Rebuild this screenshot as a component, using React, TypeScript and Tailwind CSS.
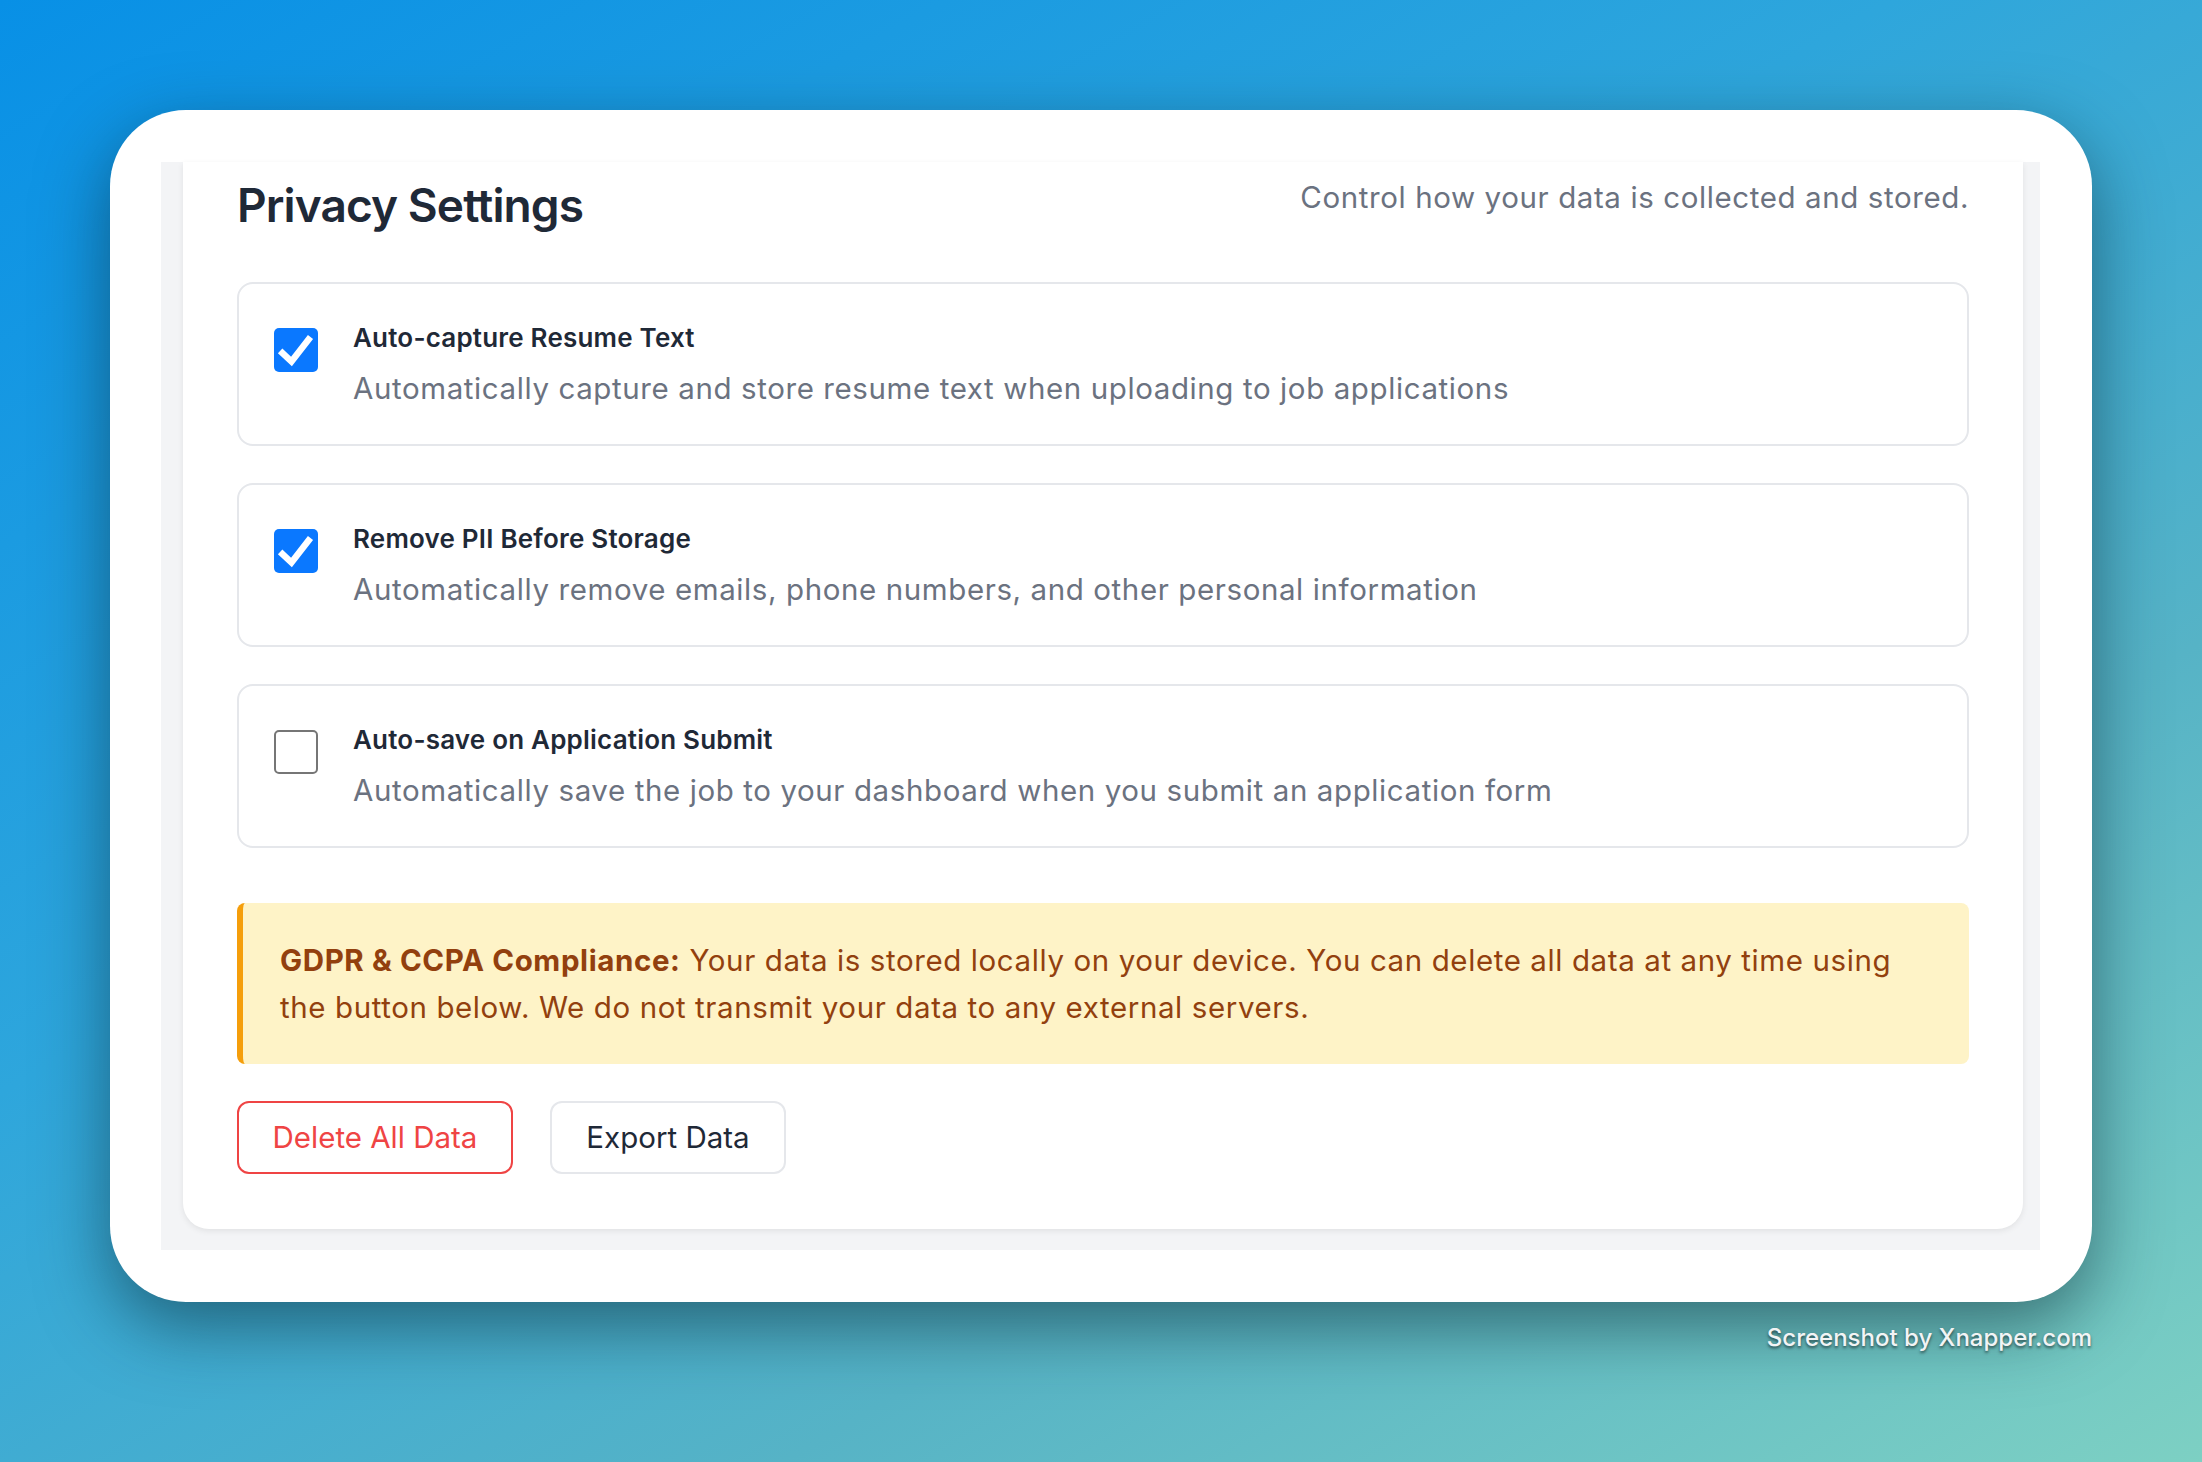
import React, { useState } from "react";

interface SettingProps {
  title: string;
  description: string;
  checked: boolean;
  onToggle: () => void;
}

const CheckBox: React.FC<{ checked: boolean }> = ({ checked }) =>
  checked ? (
    <div className="w-[44px] h-[44px] rounded-[5px] bg-[#0a78ff] flex items-center justify-center shrink-0">
      <svg width="44" height="44" viewBox="0 0 44 44" fill="none">
        <path d="M8.5 25 L17.5 33.5 L34.5 11.5" stroke="white" strokeWidth="6.5" strokeLinecap="square" strokeLinejoin="miter" />
      </svg>
    </div>
  ) : (
    <div className="w-[44px] h-[44px] rounded-[5px] border-[2.5px] border-[#767676] bg-white shrink-0" />
  );

const SettingRow: React.FC<SettingProps> = ({ title, description, checked, onToggle }) => (
  <div
    className="flex items-start gap-[35px] border-2 border-[#e5e7eb] rounded-[16px] pt-[36px] pb-[36px] px-[35px] h-[164px] cursor-pointer"
    onClick={onToggle}
  >
    <div className="mt-[8px]">
      <CheckBox checked={checked} />
    </div>
    <div className="flex flex-col">
      <span className="text-[26px] leading-[36px] font-semibold text-[#1f2937] tracking-[0.2px]">{title}</span>
      <span className="text-[29.5px] leading-[40px] mt-[12px] text-[#6b7280] tracking-[0.6px]">{description}</span>
    </div>
  </div>
);

const App: React.FC = () => {
  const [resume, setResume] = useState(true);
  const [pii, setPii] = useState(true);
  const [autoSave, setAutoSave] = useState(false);

  return (
    <div
      className="w-[2202px] h-[1462px] overflow-hidden bg-[linear-gradient(150deg,#0890e6_0%,#2ea6dc_40%,#56b3c6_70%,#7dd0c3_100%)] pt-[110px] pl-[110px]"
      style={{ fontFamily: "Inter, 'Noto Sans', sans-serif" }}
    >
      {/* window frame */}
      <div className="w-[1982px] h-[1192px] rounded-[76px] bg-white pt-[52px] pb-[52px] pl-[51px] pr-[52px] shadow-[0_24px_70px_rgba(10,40,50,0.55)]">
        <div className="h-full bg-[#f3f4f6] pl-[22px] pr-[17px] pb-[21px]">
          <div className="h-full bg-white rounded-b-[26px] shadow-[0_2px_6px_rgba(0,0,0,0.08)] px-[54px] pt-[15px]">
            {/* Header */}
            <div className="flex items-start justify-between">
              <h1 className="text-[46px] leading-[56px] font-semibold text-[#1f2937] tracking-[-0.9px]">Privacy Settings</h1>
              <p className="text-[29.5px] leading-[40px] text-[#6b7280] tracking-[0.6px]">Control how your data is collected and stored.</p>
            </div>

            {/* Options */}
            <div className="flex flex-col gap-[37px] mt-[49px]">
              <SettingRow
                title="Auto-capture Resume Text"
                description="Automatically capture and store resume text when uploading to job applications"
                checked={resume}
                onToggle={() => setResume(!resume)}
              />
              <SettingRow
                title="Remove PII Before Storage"
                description="Automatically remove emails, phone numbers, and other personal information"
                checked={pii}
                onToggle={() => setPii(!pii)}
              />
              <SettingRow
                title="Auto-save on Application Submit"
                description="Automatically save the job to your dashboard when you submit an application form"
                checked={autoSave}
                onToggle={() => setAutoSave(!autoSave)}
              />
            </div>

            {/* Compliance note */}
            <div className="mt-[55px] h-[161px] bg-[#fef3c7] border-l-[6px] border-[#f59e0b] rounded-[8px] pl-[37px] pr-[37px] pt-[34px]">
              <p className="text-[29.5px] leading-[47px] text-[#92400e] tracking-[0.6px]">
                <strong className="font-bold">GDPR &amp; CCPA Compliance:</strong> Your data is stored locally on your device. You can delete all data at any time using the button below. We do not transmit your data to any external servers.
              </p>
            </div>

            {/* Actions */}
            <div className="flex gap-[37px] mt-[37px]">
              <button className="h-[73px] w-[276px] border-2 border-[#ef4444] rounded-[12px] text-[29.5px] text-[#ef4444] bg-white">
                Delete All Data
              </button>
              <button className="h-[73px] w-[236px] border-2 border-[#e5e7eb] rounded-[12px] text-[29.5px] text-[#1f2937] bg-white">
                Export Data
              </button>
            </div>
          </div>
        </div>
      </div>

      {/* watermark */}
      <div className="w-[1982px] flex justify-end mt-[20px]">
        <span className="text-[24px] leading-[32px] font-medium text-[#f2f4f5] [text-shadow:0_2px_3px_rgba(0,0,0,0.55)]">
          Screenshot by Xnapper.com
        </span>
      </div>
    </div>
  );
};

export default App;
